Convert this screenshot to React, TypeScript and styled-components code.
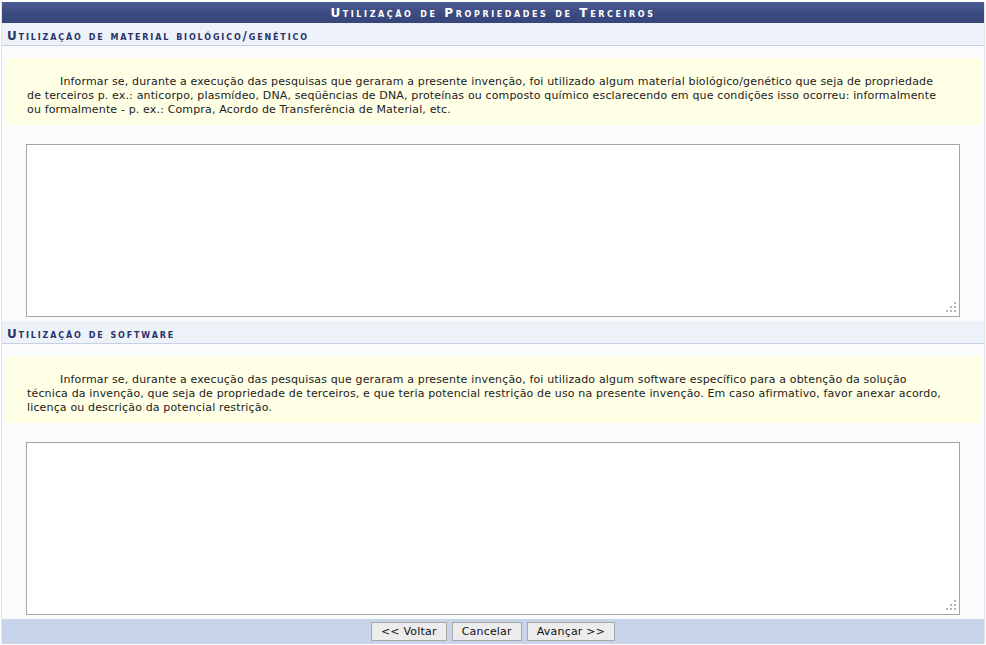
import React from "react";
import styled, { createGlobalStyle } from "styled-components";

const Global = createGlobalStyle`
  html, body { margin: 0; padding: 0; background: #ffffff; }
  body { font-family: "DejaVu Sans", Verdana, sans-serif; }
`;

const Page = styled.div`
  padding: 2px 1px 0 1px;
  width: 984px;
`;

const Frame = styled.div`
  border-left: 1px solid #dfe5ef;
  border-right: 1px solid #dfe5ef;
  background: #f9fbfd;
  display: flex;
  flex-direction: column;
`;

const Caption = styled.div`
  height: 21px;
  background: linear-gradient(#4a5a92, #3b4a7e 60%, #36457a);
  color: #ffffff;
  font-weight: bold;
  font-size: 12px;
  font-variant: small-caps;
  letter-spacing: 2.6px;
  display: flex;
  align-items: center;
  justify-content: center;
`;

const SubHeader = styled.div`
  box-sizing: border-box;
  height: 23px;
  padding: 3px 0 0 5px;
  background: #edf1f8;
  border-bottom: 1px solid #c6d1e6;
  color: #28336a;
  font-weight: bold;
  font-size: 12px;
  font-variant: small-caps;
  letter-spacing: 1.85px;
  display: flex;
  align-items: center;
`;

const Body = styled.div`
  display: flex;
  flex-direction: column;
  padding: 12px 3px 4px 4px;
`;

const Note = styled.div`
  background: #ffffe5;
  padding: 17px 4px 8px 21px;
  font-size: 11px;
  letter-spacing: 0.15px;
  line-height: 14px;
  color: #222222;
  text-indent: 33px;
`;

const AreaRow = styled.div`
  display: flex;
  padding: 19px 0 0 20px;
`;

const AreaBox = styled.div`
  position: relative;
  width: 934px;
  height: 173px;
`;

const Area = styled.textarea`
  width: 100%;
  height: 100%;
  display: block;
  box-sizing: border-box;
  border: 1px solid #a5a5a5;
  background: #ffffff;
  margin: 0;
  resize: none;
  font-family: "DejaVu Sans", Verdana, sans-serif;
  font-size: 11px;
`;

const Grip = styled.svg`
  position: absolute;
  right: 3px;
  bottom: 4px;
  width: 12px;
  height: 12px;
  pointer-events: none;
`;

const Footer = styled.div`
  height: 25px;
  background: #c8d4ea;
  display: flex;
  justify-content: center;
  align-items: center;
  gap: 5px;
`;

const Button = styled.button`
  height: 19px;
  box-sizing: border-box;
  padding: 0 9px;
  background: #ececec;
  border: 1px solid #a8a8a8;
  font-family: "DejaVu Sans", Verdana, sans-serif;
  font-size: 11px;
  letter-spacing: 0.2px;
  color: #111111;
  line-height: 17px;
`;

const GripIcon = () => (
  <Grip viewBox="0 0 12 12">
    {[
      [9, 1],
      [5, 5],
      [9, 5],
      [1, 9],
      [5, 9],
      [9, 9],
    ].map(([x, y]) => (
      <rect key={`${x}-${y}`} x={x} y={y} width="2" height="2" fill="#b4b4b4" />
    ))}
  </Grip>
);

const TextBox = () => (
  <AreaRow>
    <AreaBox>
      <Area />
      <GripIcon />
    </AreaBox>
  </AreaRow>
);

export default function App() {
  return (
    <Page>
      <Global />
      <Frame>
        <Caption>Utilização de Propriedades de Terceiros</Caption>
        <SubHeader>Utilização de material biológico/genético</SubHeader>
        <Body>
          <Note>
            Informar se, durante a execução das pesquisas que geraram a presente invenção, foi utilizado
            algum material biológico/genético que seja de propriedade
            <br />
            de terceiros p. ex.: anticorpo, plasmídeo, DNA, seqüências de DNA, proteínas ou composto
            químico esclarecendo em que condições isso ocorreu: informalmente
            <br />
            ou formalmente - p. ex.: Compra, Acordo de Transferência de Material, etc.
          </Note>
          <TextBox />
        </Body>
        <SubHeader>Utilização de software</SubHeader>
        <Body>
          <Note>
            Informar se, durante a execução das pesquisas que geraram a presente invenção, foi utilizado
            algum software específico para a obtenção da solução
            <br />
            técnica da invenção, que seja de propriedade de terceiros, e que teria potencial restrição
            de uso na presente invenção. Em caso afirmativo, favor anexar acordo,
            <br />
            licença ou descrição da potencial restrição.
          </Note>
          <TextBox />
        </Body>
        <Footer>
          <Button>&lt;&lt; Voltar</Button>
          <Button>Cancelar</Button>
          <Button>Avançar &gt;&gt;</Button>
        </Footer>
      </Frame>
    </Page>
  );
}
